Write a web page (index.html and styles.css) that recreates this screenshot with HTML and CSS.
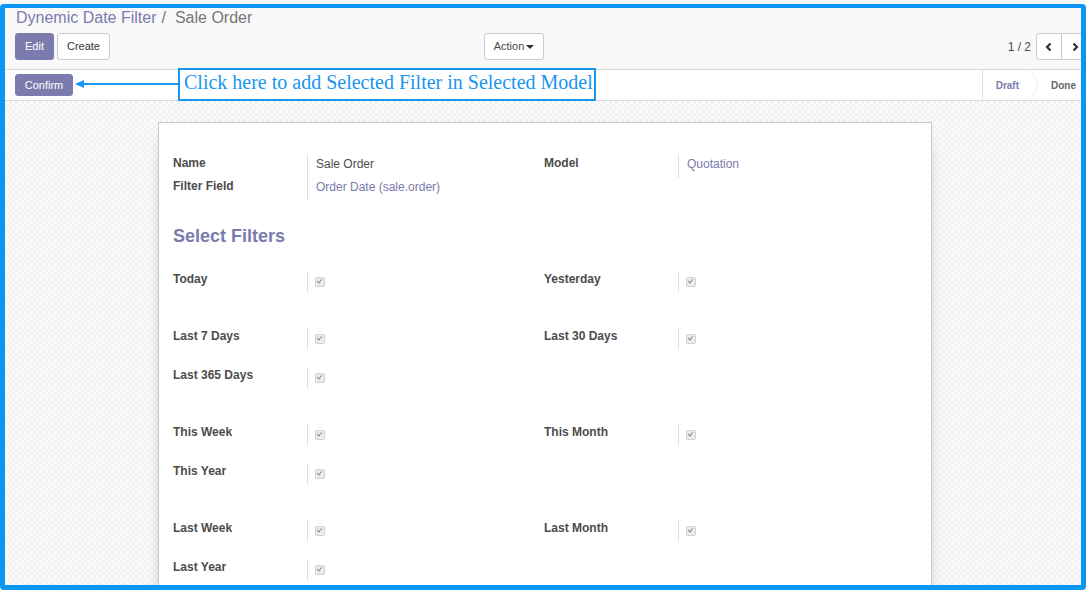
FILE: index.html
```html
<!DOCTYPE html>
<html>
<head>
<meta charset="utf-8">
<link rel="stylesheet" href="styles.css">
</head>
<body>
<div class="app">
  <div class="control-panel">
    <div class="breadcrumb">
      <span class="bc-link">Dynemic Date Filter</span><span class="bc-sep">/</span><span class="bc-active">Sale Order</span>
    </div>
    <div class="cp-row">
      <div class="cp-left">
        <div class="cp-buttons">
          <button class="btn btn-primary">Edit</button>
          <button class="btn btn-default">Create</button>
        </div>
        <button class="btn btn-default btn-action">Action <span class="caret"></span></button>
      </div>
      <div class="cp-right">
        <span class="pager-value">1 / 2</span>
        <div class="pager-btns">
          <button class="btn btn-default pager-btn"><svg width="10" height="10" viewBox="0 0 10 10"><path d="M6.5 1.5 L3 5 L6.5 8.5" fill="none" stroke="#333" stroke-width="2.2"/></svg></button>
          <button class="btn btn-default pager-btn"><svg width="10" height="10" viewBox="0 0 10 10"><path d="M3.5 1.5 L7 5 L3.5 8.5" fill="none" stroke="#333" stroke-width="2.2"/></svg></button>
        </div>
      </div>
    </div>
  </div>

  <div class="statusbar">
    <button class="btn btn-primary btn-sm">Confirm</button>
    <div class="status">
      <span class="status-item current">Draft</span>
      <span class="status-item">Done</span>
    </div>
  </div>

  <div class="sheet-bg">
    <div class="sheet">
      <div class="info-grid">
        <div class="field-table">
          <div class="field-row"><div class="lbl">Name</div><div class="val">Sale Order</div></div>
          <div class="field-row"><div class="lbl">Filter Field</div><div class="val link">Order Date (sale.order)</div></div>
        </div>
        <div class="field-table">
          <div class="field-row"><div class="lbl">Model</div><div class="val link">Quotation</div></div>
        </div>
      </div>

      <h2 class="section-title">Select Filters</h2>

      <div class="filters">
        <div class="fgroup">
          <div class="fitem"><div class="lbl">Today</div><div class="val"><span class="cb"></span></div></div>
          <div class="fitem"><div class="lbl">Yesterday</div><div class="val"><span class="cb"></span></div></div>
        </div>
        <div class="fgroup">
          <div class="fitem"><div class="lbl">Last 7 Days</div><div class="val"><span class="cb"></span></div></div>
          <div class="fitem"><div class="lbl">Last 30 Days</div><div class="val"><span class="cb"></span></div></div>
          <div class="fitem"><div class="lbl">Last 365 Days</div><div class="val"><span class="cb"></span></div></div>
        </div>
        <div class="fgroup">
          <div class="fitem"><div class="lbl">This Week</div><div class="val"><span class="cb"></span></div></div>
          <div class="fitem"><div class="lbl">This Month</div><div class="val"><span class="cb"></span></div></div>
          <div class="fitem"><div class="lbl">This Year</div><div class="val"><span class="cb"></span></div></div>
        </div>
        <div class="fgroup">
          <div class="fitem"><div class="lbl">Last Week</div><div class="val"><span class="cb"></span></div></div>
          <div class="fitem"><div class="lbl">Last Month</div><div class="val"><span class="cb"></span></div></div>
          <div class="fitem"><div class="lbl">Last Year</div><div class="val"><span class="cb"></span></div></div>
        </div>
      </div>
    </div>
  </div>
</div>

<svg class="annot-arrow" width="110" height="12" viewBox="0 0 110 12">
  <line x1="8" y1="6" x2="106" y2="6" stroke="#1a96f0" stroke-width="2"/>
  <polygon points="1,6 10,2 10,10" fill="#1a96f0"/>
</svg>
<div class="annot-box">Click here to add Selected Filter in Selected Model</div>
<div class="frame"></div>
</body>
</html>
```

FILE: styles.css
```css
html, body {
  margin: 0;
  padding: 0;
  width: 1086px;
  height: 590px;
  overflow: hidden;
  font-family: "Liberation Sans", Arial, sans-serif;
  font-size: 12px;
  color: #4c4c4c;
  background: #fff;
}

.app {
  width: 1086px;
  height: 590px;
  display: flex;
  flex-direction: column;
}

/* Control panel */
.control-panel {
  background: #f9f9f9;
  border-bottom: 1px solid #d9d9d9;
  padding: 7px 0 9px 15px;
  height: 53px;
}

.breadcrumb {
  font-size: 16px;
  line-height: 22px;
  height: 22px;
  margin: 0 0 4px 1px;
  white-space: nowrap;
}
.bc-link { color: #7c7bad; }
.bc-sep { color: #777; padding: 0 9px 0 5px; }
.bc-active { color: #777; }

.cp-row {
  display: flex;
  height: 27px;
}
.cp-left {
  width: 529px;
  display: flex;
  justify-content: space-between;
}
.cp-buttons {
  display: flex;
  gap: 3px;
}
.cp-right {
  flex: 1;
  display: flex;
  justify-content: flex-end;
  align-items: center;
  margin-right: -2px;
}

.btn {
  font-family: "Liberation Sans", Arial, sans-serif;
  font-size: 11px;
  border-radius: 3px;
  border: 1px solid #ccc;
  height: 27px;
  padding: 0 9px;
  cursor: pointer;
  line-height: 25px;
}
.btn-primary {
  background: #7c7bad;
  border-color: #7c7bad;
  color: #fff;
}
.btn-default {
  background: #fff;
  color: #333;
}
.btn-action {
  width: 60px;
  padding: 0;
  color: #4c4c4c;
}
.caret {
  display: inline-block;
  width: 0;
  height: 0;
  border-left: 4px solid transparent;
  border-right: 4px solid transparent;
  border-top: 4px solid #333;
  vertical-align: middle;
  margin-left: -1px;
}

.pager-value {
  color: #4c4c4c;
  font-size: 12px;
  margin-right: 5px;
}
.pager-btns {
  display: flex;
}
.pager-btn {
  width: 26px;
  padding: 0;
  display: flex;
  align-items: center;
  justify-content: center;
}
.pager-btn:first-child {
  border-radius: 3px 0 0 3px;
}
.pager-btn:last-child {
  border-radius: 0 3px 3px 0;
  border-left: none;
}

/* Statusbar */
.statusbar {
  height: 30px;
  border-bottom: 1px solid #d9d9d9;
  background: #fff;
  display: flex;
  align-items: center;
  justify-content: space-between;
  padding-left: 15px;
}
.btn-sm {
  height: 22px;
  line-height: 20px;
  padding: 0;
  width: 58px;
}
.status {
  display: flex;
  height: 30px;
  align-self: stretch;
}
.status-item {
  position: relative;
  font-size: 10px;
  font-weight: bold;
  color: #666;
  display: flex;
  align-items: center;
  padding: 0 12px 0 20px;
  border-left: 1px solid #e0e0e0;
}
.status-item.current {
  color: #7c7bad;
  padding-left: 13px;
}
.status-item.current::after {
  content: "";
  position: absolute;
  right: -8px;
  top: -1px;
  width: 0;
  height: 0;
  border-top: 16px solid transparent;
  border-bottom: 16px solid transparent;
  border-left: 9px solid #e0e0e0;
  z-index: 1;
}
.status-item.current::before {
  content: "";
  position: absolute;
  right: -7px;
  top: -1px;
  width: 0;
  height: 0;
  border-top: 16px solid transparent;
  border-bottom: 16px solid transparent;
  border-left: 8px solid #fff;
  z-index: 2;
}
.status-item + .status-item {
  border-left: none;
  padding-left: 20px;
  padding-right: 10px;
}

/* Sheet area */
.sheet-bg {
  flex: 1;
  background-color: #f9f9f9;
  background-image: repeating-conic-gradient(#f2f2f2 0 25%, #fbfbfb 0 50%);
  background-size: 6px 6px;
  padding-top: 21px;
  overflow: hidden;
}
.sheet {
  width: 743px;
  margin-left: 158px;
  background: #fff;
  border: 1px solid #c8c8d0;
  box-shadow: 0 5px 20px -15px #000;
  padding: 32px 15px 40px 14px;
  min-height: 600px;
}

.info-grid {
  display: grid;
  grid-template-columns: 371px 371px;
}
.field-row {
  display: flex;
}
.lbl {
  width: 134px;
  border-right: 1px solid #ddd;
  font-weight: bold;
  line-height: 17px;
  color: #4c4c4c;
}
.field-row .lbl {
  height: 23px;
}
.val {
  padding-left: 8px;
  line-height: 17px;
}
.field-row .val {
  padding-top: 1px;
}
.val.link {
  color: #7c7bad;
}

.section-title {
  font-size: 18px;
  font-weight: bold;
  color: #7c7bad;
  line-height: 26px;
  margin: 22px 0 22px;
}

.filters {
  display: flex;
  flex-direction: column;
  gap: 36px;
}
.fgroup {
  display: grid;
  grid-template-columns: 371px 371px;
  row-gap: 18px;
}
.fitem {
  display: flex;
  height: 21px;
}
.fitem .lbl {
  height: 21px;
}
.fitem .val {
  padding-left: 7px;
  padding-top: 6px;
}
.cb {
  display: block;
  width: 8px;
  height: 8px;
  border: 1px solid #d0d0d0;
  border-radius: 2px;
  background: #ececec;
  position: relative;
}
.cb::after {
  content: "";
  position: absolute;
  left: 2px;
  top: 0px;
  width: 2px;
  height: 4px;
  border-right: 1.5px solid #8a8a8a;
  border-bottom: 1.5px solid #8a8a8a;
  transform: rotate(40deg);
}

/* Annotation overlay */
.annot-arrow {
  position: absolute;
  left: 74px;
  top: 78px;
}
.annot-box {
  position: absolute;
  left: 178px;
  top: 68px;
  width: 410px;
  height: 29px;
  border: 2px solid #1a96f0;
  background: #fff;
  color: #1a96f0;
  font-family: "Liberation Serif", "Times New Roman", serif;
  font-size: 20px;
  line-height: 25px;
  padding-left: 4px;
  box-sizing: content-box;
  white-space: nowrap;
}
.frame {
  position: absolute;
  left: 0;
  top: 4px;
  width: 1076px;
  height: 577px;
  border: 5px solid #0a96f5;
  border-top-width: 4px;
  border-radius: 4px;
  pointer-events: none;
}
```
